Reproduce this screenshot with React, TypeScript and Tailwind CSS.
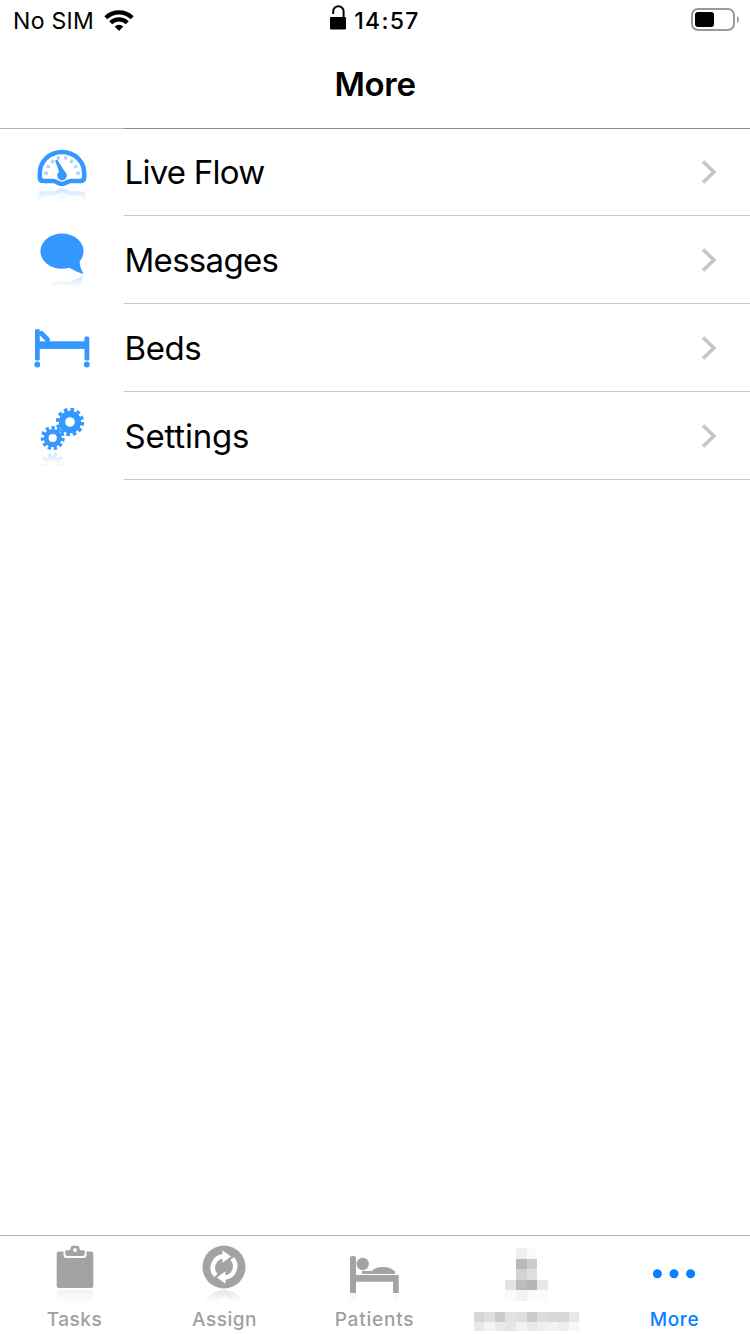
import type { ReactNode } from 'react'

interface MenuItem {
  title: string
  icon: ReactNode
  spacing: string
}

interface TabItem {
  title: string
  icon: ReactNode
  spacing: string
  active?: boolean
}

interface ReflectedProps {
  axis: number
  depth: number
  opacity?: number
  children: ReactNode
}

// Draws its children with a fading mirror image below the given y
const Reflected = ({ axis, depth, opacity = 0.28, children }: ReflectedProps) => (
  <>
    <g opacity={opacity} transform={`matrix(1 0 0 -1 0 ${axis * 2})`}>
      {children}
    </g>
    <rect x="20" y={axis} width="110" height={depth} fill="url(#fade)" />
    <rect x="20" y={axis + depth} width="110" height="90" fill="#fff" />
    {children}
  </>
)

const GaugeIcon = () => (
  <Reflected axis={59.3} depth={13}>
    <g fill="none" stroke="#3598ff">
      <path
        d="M43.5 53Q39.8 53 39.8 49V45A22.2 21 0 0 1 84.2 45V49Q84.2 53 80.5 53H71C67 53 66 56 62 56S57 53 53 53Z"
        strokeWidth="4.6"
      />
      <path
        d="M44.2 45.3H47.8M46.8 38L49.8 39.5M51.4 32L53.5 34.8M57.8 28.3L58.7 31.5M66.2 28.3L65.3 31.5M72.6 32L70.5 34.8M77.2 38L74.2 39.5M76.2 45.3H79.8"
        strokeWidth="3"
        opacity=".45"
      />
    </g>
    <path d="M55 32.5L57.2 31.6L65 44L60 46Z" fill="#3598ff" />
    <circle cx="62" cy="47.6" r="4.8" fill="#3598ff" />
  </Reflected>
)

const MessageIcon = () => (
  <Reflected axis={59} depth={12}>
    <g fill="#3598ff">
      <ellipse cx="62" cy="35.2" rx="21.6" ry="17.6" />
      <path d="M67 51C73 53 77 56.5 83.5 58C81.5 54 79.5 50 79.5 43Z" />
    </g>
  </Reflected>
)

const BedIcon = () => (
  <g fill="#3598ff">
    <rect x="35" y="25" width="4.8" height="31.5" rx="1.5" />
    <rect x="84.5" y="32.5" width="4.8" height="24" rx="1.5" />
    <rect x="37" y="37.3" width="50" height="7.6" />
    <path d="M41.5 29.5L47.5 35.5" stroke="#3598ff" strokeWidth="5" strokeLinecap="round" />
    <circle cx="37.3" cy="60.5" r="2.9" />
    <circle cx="86.8" cy="60.5" r="2.9" />
  </g>
)

const SettingsIcon = () => (
  <Reflected axis={59.5} depth={13}>
    <g fill="none" stroke="#3598ff">
      <circle cx="70" cy="30" r="8" strokeWidth="6.4" />
      <circle cx="70" cy="30" r="12" strokeWidth="4.4" strokeDasharray="3.5 2.783" />
      <circle cx="52.7" cy="46" r="6.6" strokeWidth="5" />
      <circle cx="52.7" cy="46" r="10" strokeWidth="4" strokeDasharray="3.1 2.612" />
      <path d="M57.5 38.5L62 36" strokeWidth="5" opacity=".45" />
    </g>
  </Reflected>
)

const TasksIcon = () => (
  <Reflected axis={53} depth={14} opacity={0.16}>
    <rect x="56.7" y="15.5" width="36.6" height="36.5" rx="2" fill="#a3a3a3" />
    <path d="M63.5 14H86.5V18.5Q86.5 22 83.5 22H66.5Q63.5 22 63.5 18.5Z" fill="#fff" />
    <path
      d="M65.3 14.2H69.5Q70.5 14 70.7 11.5Q70.9 9.7 72.5 9.7H77.5Q79.1 9.7 79.3 11.5Q79.5 14 80.5 14.2H84.7V17.5Q84.7 20 82 20H68Q65.3 20 65.3 17.5Z"
      fill="#a3a3a3"
    />
    <circle cx="75" cy="14" r="2" fill="#fff" />
  </Reflected>
)

const AssignIcon = () => (
  <Reflected axis={53.3} depth={13}>
    <circle cx="74" cy="31" r="21.5" fill="#a3a3a3" />
    <g fill="none" stroke="#fff" strokeWidth="4.6">
      <path d="M65.8 39.5A11.5 11.5 0 0 1 73.5 20.3" />
      <path d="M82.2 22.5A11.5 11.5 0 0 1 74.5 41.7" />
    </g>
    <g fill="#fff">
      <path d="M72.5 14.2L81 20.5L72.5 26.8Z" />
      <path d="M75.5 47.8L67 41.5L75.5 35.2Z" />
    </g>
  </Reflected>
)

const PatientsIcon = () => (
  <Reflected axis={57.5} depth={9} opacity={0.12}>
    <g fill="#a3a3a3">
      <path d="M50 57V22.5Q50 19.7 53 19.7T56 22.5V39H98.7V57H93V45.7H56V57Z" />
      <circle cx="62.7" cy="28" r="6.2" />
      <path d="M62 35H71.7C74 32.3 78 31 83 31S92 32.3 94 35H95V38H62Z" />
    </g>
  </Reflected>
)

const MoreIcon = () => (
  <g fill="#0a7fff">
    <circle cx="57.4" cy="37.7" r="4.5" />
    <circle cx="74" cy="37.7" r="4.5" />
    <circle cx="90.6" cy="37.7" r="4.5" />
  </g>
)

const iconCells = [
  ['#ffffff', '#efefef', '#fbfbfb', '#ffffff'],
  ['#ffffff', '#b9b9b9', '#cccccc', '#ffffff'],
  ['#ffffff', '#d2d2d2', '#e0e0e0', '#ffffff'],
  ['#e4e4e4', '#bcbcbc', '#b5b5b5', '#e9e9e9'],
  ['#fbfbfb', '#f2f2f2', '#fafafa', '#fbfbfb'],
]

const labelCells = [
  ['#d6d6d6', '#dedede', '#cbcbcb', '#e3e3e3', '#dedede', '#cbcbcb', '#dddddd', '#d8d8d8', '#d8d8d8', '#e8e8e8'],
  ['#e9e9e9', '#f4f4f4', '#e9e9e9', '#e5e5e5', '#f2f2f2', '#e9e9e9', '#f0f0f0', '#f3f3f3', '#eeeeee', '#f8f8f8'],
]

const HiddenTab = () => (
  <div className="flex h-[98px] w-[150px] flex-col pt-3">
    <div className="ml-[55px] grid w-[43px] grid-cols-[11px_11px_10px_11px] grid-rows-[11px_10px_11px_10px_11px]">
      {iconCells.flat().map((color, index) => (
        <span key={index} style={{ backgroundColor: color }} />
      ))}
    </div>
    <div className="mt-[11px] ml-6 grid w-[105px] grid-cols-[10px_11px_10px_11px_11px_10px_11px_10px_11px_10px] grid-rows-[10px_9px]">
      {labelCells.flat().map((color, index) => (
        <span key={index} style={{ backgroundColor: color }} />
      ))}
    </div>
  </div>
)

const menuItems: MenuItem[] = [
  { title: 'Live Flow', icon: <GaugeIcon />, spacing: 'tracking-[-0.75px]' },
  { title: 'Messages', icon: <MessageIcon />, spacing: 'tracking-[-0.7px]' },
  { title: 'Beds', icon: <BedIcon />, spacing: 'tracking-[-0.4px]' },
  { title: 'Settings', icon: <SettingsIcon />, spacing: 'tracking-[-0.2px]' },
]

const leftTabs: TabItem[] = [
  { title: 'Tasks', icon: <TasksIcon />, spacing: 'tracking-[0.5px]' },
  { title: 'Assign', icon: <AssignIcon />, spacing: 'tracking-[0.5px]' },
  { title: 'Patients', icon: <PatientsIcon />, spacing: 'tracking-[0.8px]' },
]

const StatusBar = () => (
  <div className="grid h-10 grid-cols-3 items-center">
    <div className="flex items-center pl-[13px]">
      <span className="pt-0.5 text-[23px] leading-8 tracking-[0.3px]">No SIM</span>
      <svg className="ml-2.5 h-[23px] w-[30px]" viewBox="0 0 30 23">
        <g fill="none" stroke="#000" strokeWidth="4.2">
          <path d="M1.8 8.7A19 19 0 0 1 28.2 8.7" />
          <path d="M6.7 13.7A12 12 0 0 1 23.3 13.7" />
        </g>
        <path d="M10.7 17.5A6.2 6.2 0 0 1 19.3 17.5L15 22Z" />
      </svg>
    </div>
    <div className="flex items-center justify-center">
      <svg className="mr-2 h-[25px] w-4 -translate-y-[3px]" viewBox="0 0 16 25">
        <rect y="12" width="16" height="12.5" rx="1" />
        <path d="M3.2 9V6.5A5.2 5.2 0 0 1 13.6 6.5V13" fill="none" stroke="#000" strokeWidth="2" />
      </svg>
      <span className="pt-0.5 text-[23px] leading-8 font-medium tracking-[1.3px]">14:57</span>
    </div>
    <div className="flex justify-end pr-[11px]">
      <svg className="h-6 w-12" viewBox="0 0 48 24">
        <rect x="1" y="1" width="42" height="21" rx="6" fill="none" stroke="#999" strokeWidth="2" />
        <rect x="4" y="4" width="19" height="15" rx="3" />
        <path d="M46 8Q48 9 48 11.5T46 15Z" fill="#999" />
      </svg>
    </div>
  </div>
)

const MenuRow = ({ title, icon, spacing }: MenuItem) => (
  <li className="flex h-[88px]">
    <svg className="h-[88px] w-[124px] shrink-0 blur-[0.5px]" viewBox="0 0 124 88">
      {icon}
    </svg>
    <div className="flex grow items-center justify-between border-b border-[#c6c6c8] pr-[33px] pl-[0.5px]">
      <span className={`text-[33px] leading-10 ${spacing}`}>{title}</span>
      <svg className="h-6 w-4" viewBox="0 0 16 24">
        <path d="M2 1.5L13 12L2 22.5" fill="none" stroke="#c4c4c7" strokeWidth="3.5" />
      </svg>
    </div>
  </li>
)

const Tab = ({ title, icon, spacing, active }: TabItem) => (
  <div className="flex h-[98px] w-[150px] flex-col items-center">
    <svg
      className={`h-[70px] w-[150px] shrink-0 ${active ? '' : 'blur-[0.5px]'}`}
      viewBox="0 0 150 70"
    >
      {icon}
    </svg>
    <span
      className={`pr-px text-[19px] leading-[27px] font-medium ${spacing} ${
        active ? 'text-[#0a7fff]' : 'text-[#a0a0a0]'
      }`}
    >
      {title}
    </span>
  </div>
)

const App = () => {
  return (
    <div className="flex h-[1334px] w-[750px] flex-col overflow-hidden bg-white font-['Inter','Liberation_Sans',sans-serif] text-black">
      <svg className="absolute size-0">
        <defs>
          <linearGradient id="fade" x1="0" y1="0" x2="0" y2="1">
            <stop offset="0" stopColor="#fff" stopOpacity="0" />
            <stop offset="1" stopColor="#fff" />
          </linearGradient>
        </defs>
      </svg>
      <StatusBar />
      <header className="flex h-[88px] items-center justify-center">
        <h1 className="text-[33px] leading-10 font-semibold tracking-[-0.3px]">More</h1>
      </header>
      <div className="flex h-px shrink-0">
        <div className="w-[124px] bg-[#b2b2b2]" />
        <div className="grow bg-[#8c8c8d]" />
      </div>
      <ul className="-mt-px grow">
        {menuItems.map((item) => (
          <MenuRow key={item.title} {...item} />
        ))}
      </ul>
      <nav className="flex h-[99px] shrink-0 border-t border-[#b0b0b0]">
        {leftTabs.map((tab) => (
          <Tab key={tab.title} {...tab} />
        ))}
        <HiddenTab />
        <Tab title="More" icon={<MoreIcon />} spacing="tracking-[0.6px]" active />
      </nav>
    </div>
  )
}

export default App
